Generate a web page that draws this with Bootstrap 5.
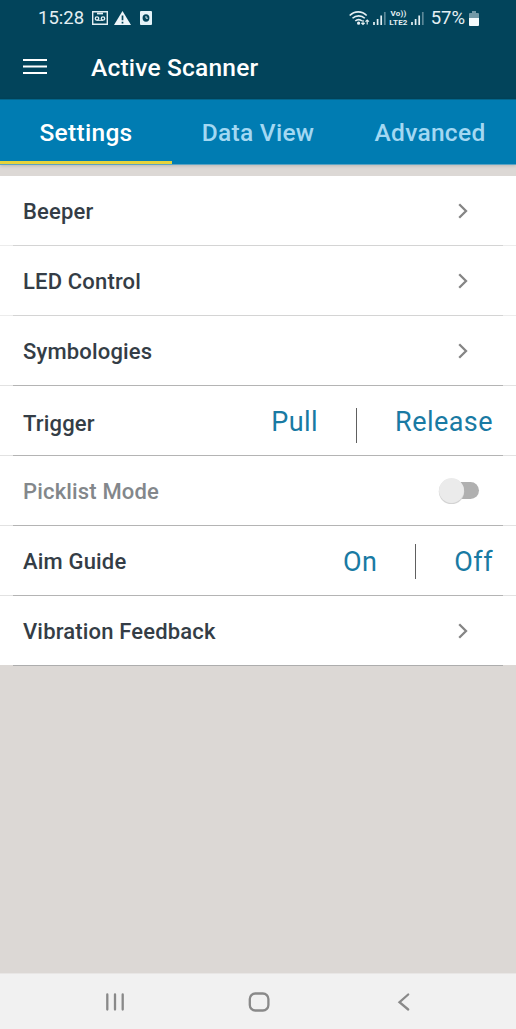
<!DOCTYPE html>
<html lang="en">
<head>
<meta charset="utf-8">
<meta name="viewport" content="width=device-width, initial-scale=1">
<title>Active Scanner</title>
<link href="https://cdn.jsdelivr.net/npm/bootstrap@5.3.0/dist/css/bootstrap.min.css" rel="stylesheet">
<style>
body { font-family: Roboto, "Liberation Sans", sans-serif; background: #dcd8d5; height: 1029px; overflow: hidden; line-height: 1; }
svg { display: block; flex: none; }
.top-area { background: #02445b; height: 99px; }
.status-bar { height: 36px; padding: 0 37px 0 38px; color: #e4eff3; font-size: 18.5px; }
.volte { font-size: 8px; line-height: 9px; font-weight: 700; margin: 0 3px; letter-spacing: .2px; }
.app-bar { height: 63px; padding: 0 23px 1px; color: #fff; }
.app-title { font-size: 24.5px; font-weight: 500; letter-spacing: .2px; margin: 1px 0 0 44px; }
.tab-strip { background: #007cb2; height: 66px; border-top: 1px solid #03668c; border-bottom: 1px solid #5ba3c4; box-shadow: 0 1px 3px rgba(0,0,0,.15); }
.tab-strip .nav-link { width: 172px; height: 64px; padding: 2px 0 0; border-radius: 0; color: #a3d8f2; font-size: 24.5px; font-weight: 500; letter-spacing: .3px; }
.tab-strip .nav-link.active { color: #fff; box-shadow: inset 0 -3px #e5d33c; }
.settings-list { margin-top: 11px; }
.setting { height: 70px; border: 0; padding: 0 23px; font-size: 22px; font-weight: 500; color: #343d46; letter-spacing: .17px;
  background: linear-gradient(#b4b4b4, #b4b4b4) 13px 69px / 490px 1px no-repeat, linear-gradient(#e2e2e2, #e2e2e2) 0 69px / 100% 1px no-repeat, #fff; }
.setting.soft { background: linear-gradient(#d4d4d4, #d4d4d4) 13px 69px / 490px 1px no-repeat, linear-gradient(#ececec, #ececec) 0 69px / 100% 1px no-repeat, #fff; }
.setting:last-child { background: linear-gradient(#adadad, #adadad) 13px 69px / 490px 1px no-repeat, linear-gradient(#dcd8d5, #dcd8d5) 0 69px / 100% 1px no-repeat, #fff; }
.setting.inactive { color: #83878b; }
.setting-name { padding-top: 2px; }
.setting-name.lowered { padding-top: 6px; }
.action { background: none; border: 0; padding: 2px 0 0; color: #197aa3; font-size: 27px; font-weight: 400; letter-spacing: .45px; }
.rule { width: 1px; height: 35px; background: #606060; margin: 0 38px; }
.toggle { margin: 0 13px 0 0; }
.chevron { margin-right: 24px; }
.system-nav { height: 56px; background: #f1f1f1; border-top: 1px solid #e8e6e5; }
</style>
</head>
<body class="d-flex flex-column">
<header class="top-area flex-shrink-0">
  <div class="status-bar d-flex align-items-center">
    <span>15:28</span>
    <svg width="16" height="14" viewBox="0 0 16 14" style="margin-left:8px" fill="none" stroke="#e4eff3"><path d="M.7.7h14.6v12.6H.7z" stroke-width="1.4"/><path d="M5 2.500h6" stroke-width="1.800"/><circle cx="5" cy="7.500" r="1.700" stroke-width="1.300"/><circle cx="11" cy="7.500" r="1.700" stroke-width="1.300"/><path d="M5 9.300h6" stroke-width="1.100"/></svg>
    <svg width="17" height="14" viewBox="0 0 17 14" style="margin-left:6px"><path d="M8.500 0 17 14H0z" fill="#eef6fa"/><path d="M8.500 4.600v4.700M8.500 10.700v1.800" stroke="#02445b" stroke-width="1.700"/></svg>
    <svg width="12" height="14" viewBox="0 0 13 14" preserveAspectRatio="none" style="margin-left:9px"><rect width="13" height="14" rx="1" fill="#e4f2f8"/><circle cx="6.500" cy="7" r="3.700" fill="#02445b"/><path d="M6.500 5v2.200h2" fill="none" stroke="#e4f2f8"/></svg>
    <div class="d-flex align-items-center ms-auto">
      <svg width="21" height="15" viewBox="0 0 21 15" fill="none" stroke="#e4eff3" stroke-width="1.600"><path d="M.7 4.500c4.800-4.800 12.300-4.800 17 0M3.500 7.300c3.400-3.300 9-3.300 12.300 0M6.300 10c2-1.900 4.800-1.900 6.600 0"/><circle cx="9.600" cy="12.200" r=".8" fill="#e4eff3"/><path d="M14 9v4.500m-1.700-1.700L14 13.500l1.700-1.700M18.200 13.500V9m-1.700 1.700L18.200 9l1.700 1.700" stroke-width="1.200"/></svg>
      <svg width="13" height="14" viewBox="0 0 13 14" style="margin-left:3px" stroke="#e4eff3" stroke-width="1.700"><path d="M1 14v-3M4.600 14V8M8.200 14V4.500"/><path d="M11.800 14V1" opacity=".4"/></svg>
      <div class="volte text-center"><div>Vo))</div><div>LTE2</div></div>
      <svg width="13" height="14" viewBox="0 0 13 14" stroke="#e4eff3" stroke-width="1.700"><path d="M1 14v-3M4.600 14V8M8.200 14V4.500"/><path d="M11.800 14V1" opacity=".4"/></svg>
      <span style="margin-left:7px">57%</span>
      <svg width="10" height="15" viewBox="0 0 10 15" style="margin-left:4px"><path d="M3 0h4v2h2q1 0 1 1v4H0V3q0-1 1-1h2z" fill="#7299a7"/><path d="M0 7h10v7q0 1-1 1H1q-1 0-1-1z" fill="#f4fafc"/></svg>
    </div>
  </div>
  <div class="app-bar d-flex align-items-center">
    <svg width="24" height="16" viewBox="0 0 24 16" stroke="#fff" stroke-width="2"><path d="M0 1h24M0 7.500h24M0 14h24"/></svg>
    <h1 class="app-title">Active Scanner</h1>
  </div>
</header>
<nav class="tab-strip nav flex-nowrap flex-shrink-0">
  <a class="nav-link active d-flex align-items-center justify-content-center" href="#"><span>Settings</span></a>
  <a class="nav-link d-flex align-items-center justify-content-center" href="#"><span>Data View</span></a>
  <a class="nav-link d-flex align-items-center justify-content-center" href="#"><span>Advanced</span></a>
</nav>
<main class="settings-list list-group list-group-flush rounded-0 flex-shrink-0">
  <div class="setting soft d-flex align-items-center justify-content-between"><span class="setting-name">Beeper</span><svg class="chevron" width="12" height="16" viewBox="0 0 12 16" fill="none" stroke="#858585" stroke-width="2.300"><path d="M2.200 1.200 9 8l-6.800 6.800"/></svg></div>
  <div class="setting soft d-flex align-items-center justify-content-between"><span class="setting-name">LED Control</span><svg class="chevron" width="12" height="16" viewBox="0 0 12 16" fill="none" stroke="#858585" stroke-width="2.300"><path d="M2.200 1.200 9 8l-6.800 6.800"/></svg></div>
  <div class="setting d-flex align-items-center justify-content-between"><span class="setting-name">Symbologies</span><svg class="chevron" width="12" height="16" viewBox="0 0 12 16" fill="none" stroke="#858585" stroke-width="2.300"><path d="M2.200 1.200 9 8l-6.800 6.800"/></svg></div>
  <div class="setting d-flex align-items-center justify-content-between"><span class="setting-name lowered">Trigger</span>
    <div class="d-flex align-items-center"><button class="action">Pull</button><span class="rule mt-2"></span><button class="action">Release</button></div></div>
  <div class="setting inactive d-flex align-items-center justify-content-between"><span class="setting-name">Picklist Mode</span>
    <svg class="toggle" width="44" height="30" viewBox="0 0 44 30"><rect x="10" y="6" width="33" height="17" rx="8.500" fill="#b0b0b0"/><circle cx="15.500" cy="15.400" r="12.700" fill="#d3d3d3"/><circle cx="15.500" cy="14.500" r="12.500" fill="#ebebeb"/></svg></div>
  <div class="setting d-flex align-items-center justify-content-between"><span class="setting-name">Aim Guide</span>
    <div class="d-flex align-items-center"><button class="action">On</button><span class="rule"></span><button class="action">Off</button></div></div>
  <div class="setting d-flex align-items-center justify-content-between"><span class="setting-name">Vibration Feedback</span><svg class="chevron" width="12" height="16" viewBox="0 0 12 16" fill="none" stroke="#858585" stroke-width="2.300"><path d="M2.200 1.200 9 8l-6.800 6.800"/></svg></div>
</main>
<footer class="system-nav mt-auto flex-shrink-0 d-flex align-items-center">
  <svg width="516" height="56" viewBox="0 0 516 56" fill="none" stroke="#898989" stroke-width="2.300" stroke-linecap="round"><path d="M107.300 20.500v15M115 20.500v15M122.700 20.500v15"/><rect x="249.800" y="19.500" width="18.600" height="17" rx="5.500"/><path d="M408.200 20.500 399.500 28.200l8.700 7.300"/></svg>
</footer>
<script src="https://cdn.jsdelivr.net/npm/bootstrap@5.3.0/dist/js/bootstrap.bundle.min.js"></script>
</body>
</html>
